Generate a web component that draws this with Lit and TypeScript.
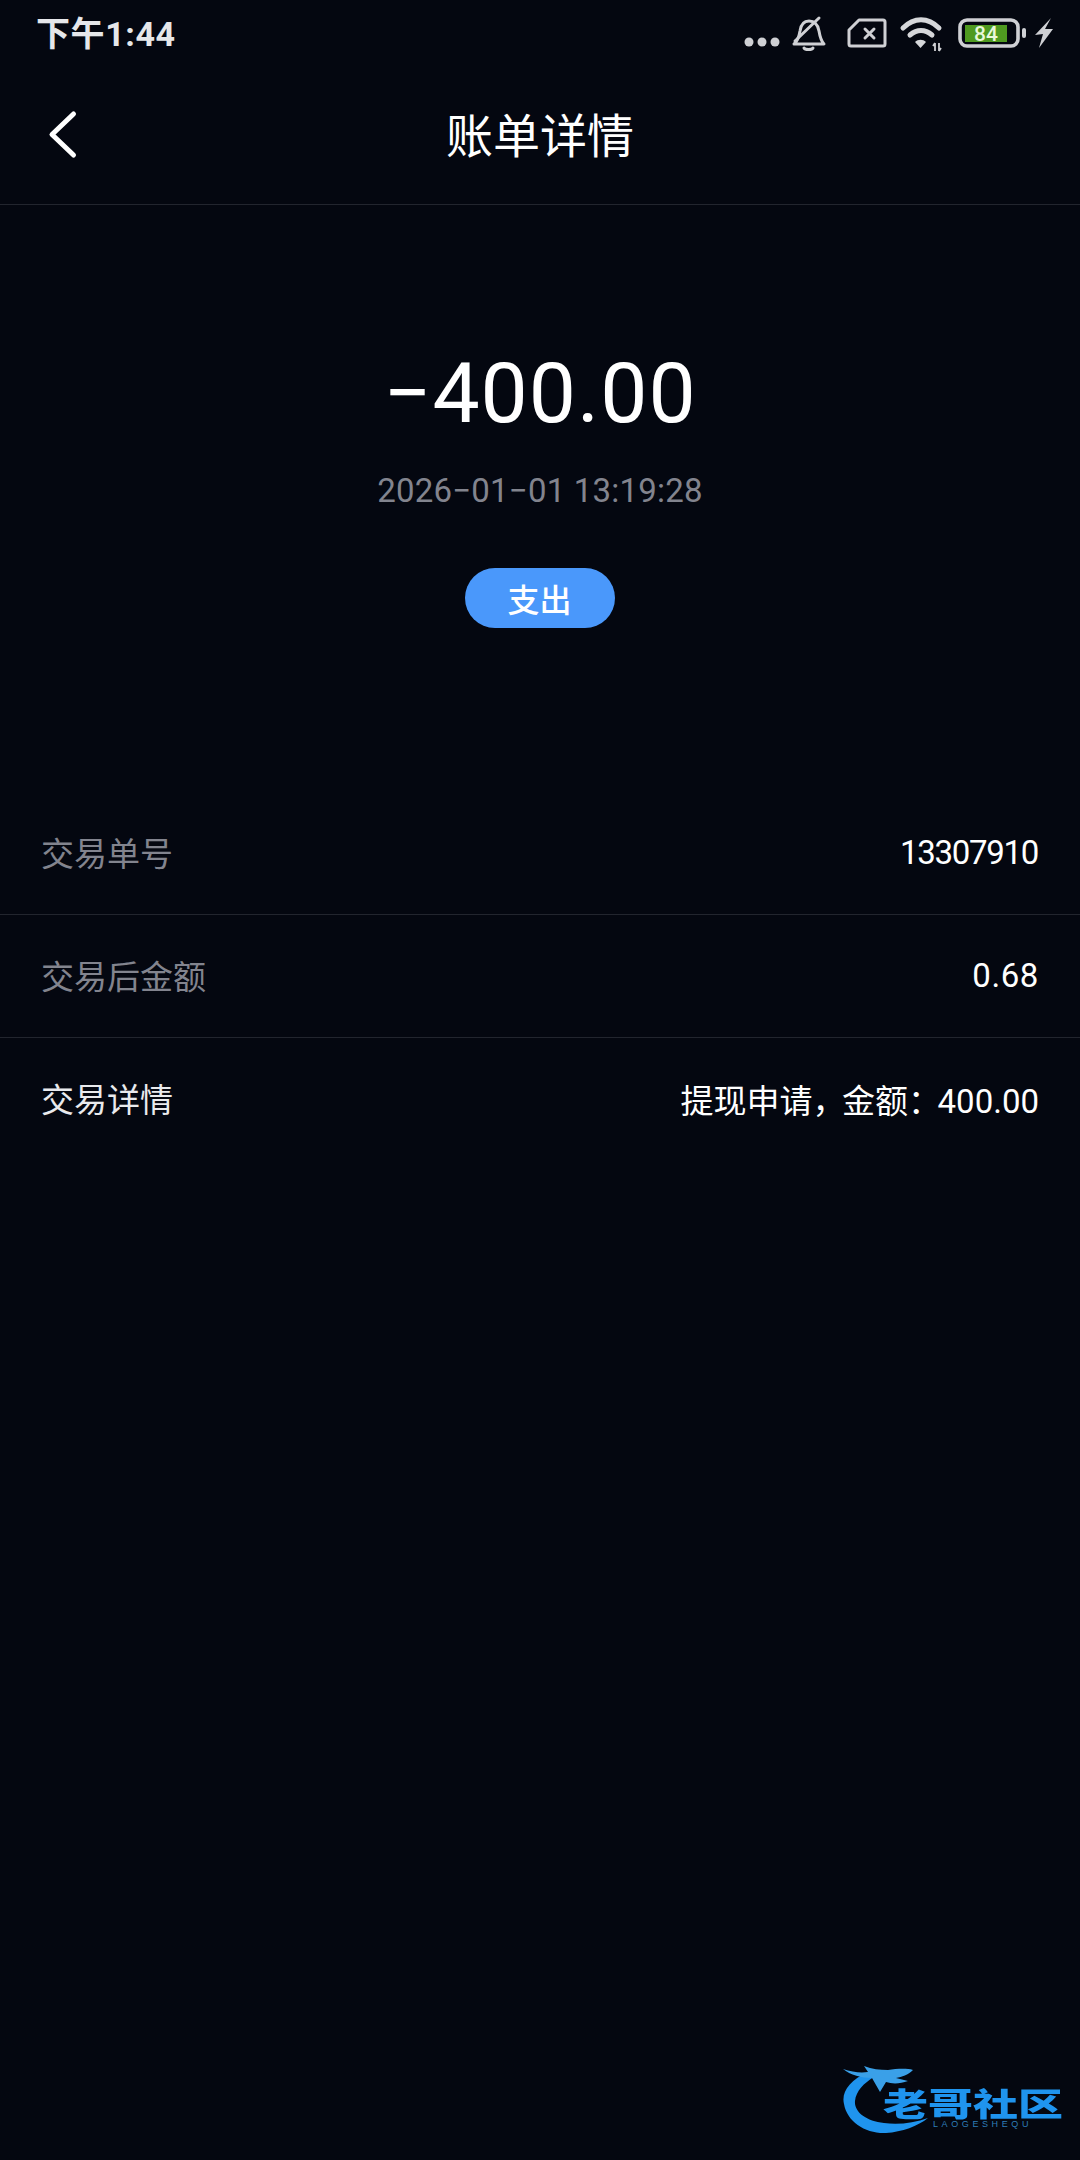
import { LitElement, html, css } from "lit";
import { customElement } from "lit/decorators.js";

@customElement("app-root")
export class AppRoot extends LitElement {
  static styles = css`
    :host { display: block; width: 1080px; height: 2160px; background: #040710; color: #fff; font-family: "Roboto", "Noto Sans CJK SC", sans-serif; position: relative; overflow: hidden; }
    .status { height: 68px; display: flex; align-items: center; justify-content: space-between; padding: 0 18px 0 36px; box-sizing: border-box; }
    .time { font-size: 34px; font-weight: 700; color: #e6e7ea; line-height: 68px; letter-spacing: 0.6px; }
    .icons { display: block; width: 340px; height: 68px; }
    .nav { height: 136px; display: flex; align-items: center; justify-content: center; position: relative; border-bottom: 1px solid #22252e; }
    .back { position: absolute; left: 45px; top: 41px; width: 34px; height: 52px; }
    .title { font-size: 47px; font-family: "Noto Sans CJK SC", sans-serif; line-height: 60px; margin-top: -6px; }
    .head { display: flex; flex-direction: column; align-items: center; padding-top: 134px; }
    .amount { font-size: 84px; line-height: 110px; letter-spacing: 1px; }
    .date { font-size: 33px; line-height: 44px; margin-top: 20px; color: #82848e; letter-spacing: 0.2px; }
    .pill { margin-top: 55px; margin-left: -1px; width: 150px; height: 60px; border-radius: 30px; background: #4a98fb; display: flex; align-items: center; justify-content: center; font-size: 32px; font-weight: 500; font-family: "Noto Sans CJK SC", sans-serif; }
    .list { margin-top: 164px; }
    .row { height: 122px; display: flex; align-items: center; justify-content: space-between; padding: 0 41px; border-bottom: 1px solid #22252e; font-size: 33px; }
    .row:last-child { border-bottom: none; }
    .label { color: #82848e; font-family: "Noto Sans CJK SC", sans-serif; margin-top: -2px; }
    .label.on { color: #e9eaed; }
    .val { color: #fff; margin-top: -1px; }
    .id { letter-spacing: -1.3px; margin-right: 1px; }
    .dec { letter-spacing: 0.6px; }
    .p { letter-spacing: -3.5px; }
    .mark { position: absolute; left: 836px; top: 2060px; width: 236px; height: 90px; }
    .mark svg { position: absolute; left: 0; top: 0; width: 100px; height: 80px; filter: blur(0.5px); }
    .mark .cn { position: absolute; left: 47px; top: 25px; font-size: 45px; line-height: 34px; font-weight: 900; color: #1f94ee; font-family: "Noto Sans CJK SC", sans-serif; white-space: nowrap; transform: scaleY(0.72); filter: blur(0.5px); }
    .mark .en { position: absolute; left: 97px; top: 59px; font-size: 9px; line-height: 11px; letter-spacing: 3.6px; color: #2e7db8; font-family: "Liberation Sans", sans-serif; }
  `;

  render() {
    return html`
      <div class="status">
        <span class="time">下午1:44</span>
        <svg class="icons" viewBox="0 0 340 68" fill="none">
          <g fill="#cfd0d4"><circle cx="27" cy="42" r="4.5"/><circle cx="40" cy="42" r="4.5"/><circle cx="53" cy="42" r="4.5"/></g>
          <g stroke="#cfd0d4" stroke-width="3" stroke-linecap="round" stroke-linejoin="round">
            <path d="M72 44c4-3 5-7 6-13 1-7 4-10 9-10 6 0 9 4 10 10 1 6 2 10 5 13z"/>
            <path d="M73 41 97 18"/>
            <path d="M82 48c1 2 8 2 9 0"/>
            <path d="M137 20h24a2 2 0 0 1 2 2v22a2 2 0 0 1-2 2h-32a2 2 0 0 1-2-2V30z"/>
            <path d="M143 29l9 9M152 29l-9 9"/>
          </g>
          <g stroke="#d6d7da" stroke-width="5" stroke-linecap="round" fill="none">
            <path d="M181 28c11-11 25-11 36 0"/>
            <path d="M188 35c7-6 15-6 22 0"/>
          </g>
          <path d="M193 42c3-3 8-3 11 0l-5.500 6z" fill="#d6d7da"/>
          <path d="M213 43v8M213 43l-2 3M217 51v-8M217 51l2-3" stroke="#cfd0d4" stroke-width="1.800" fill="none"/>
          <rect x="238" y="20" width="58" height="26" rx="7" stroke="#cfd0d4" stroke-width="3.600"/>
          <rect x="243" y="25" width="42" height="17" fill="#4f9a20"/>
          <text x="264" y="41" text-anchor="middle" font-size="21" font-weight="500" font-family="Roboto, sans-serif" fill="#e8f8da">84</text>
          <rect x="300" y="28" width="4" height="10" rx="2" fill="#cfd0d4"/>
          <path d="M329 18 313 35l8-1-4 14 14-19-8 0z" fill="#cfd0d4"/>
        </svg>
      </div>
      <div class="nav">
        <svg class="back" viewBox="0 0 34 52" fill="none"><path d="M28.500 5 7 25.500 28.500 46" stroke="#fff" stroke-width="5" stroke-linecap="round" stroke-linejoin="round"/></svg>
        <span class="title">账单详情</span>
      </div>
      <div class="head">
        <div class="amount">−400.00</div>
        <div class="date">2026−01−01 13:19:28</div>
        <div class="pill">支出</div>
      </div>
      <div class="list">
        <div class="row"><span class="label">交易单号</span><span class="val id">13307910</span></div>
        <div class="row"><span class="label">交易后金额</span><span class="val dec">0.68</span></div>
        <div class="row"><span class="label on">交易详情</span><span class="val">提现申请<span class="p">，</span>金额<span class="p">：</span>400.00</span></div>
      </div>
      <div class="mark">
        <svg viewBox="0 0 100 80" fill="none">
          <path d="M32 12C14 20 5 32 8 44c3 18 22 30 42 29 16-1 32-7 42-15-14 5-30 7-44 5-18-2-30-11-29-22 1-10 9-18 19-24z" fill="#1f94ee"/>
          <path d="M7 9c9 3 17 4 25 3l-4-6c8 3 16 4 24 4 8-1 18-2 25 0-5 5-11 7-17 8l12 3c-8 3-16 3-22 1l-6 10-8-14C26 18 14 15 7 9z" fill="#3aa0e8"/>
        </svg>
        <span class="cn">老哥社区</span>
        <span class="en">LAOGESHEQU</span>
      </div>
    `;
  }
}
